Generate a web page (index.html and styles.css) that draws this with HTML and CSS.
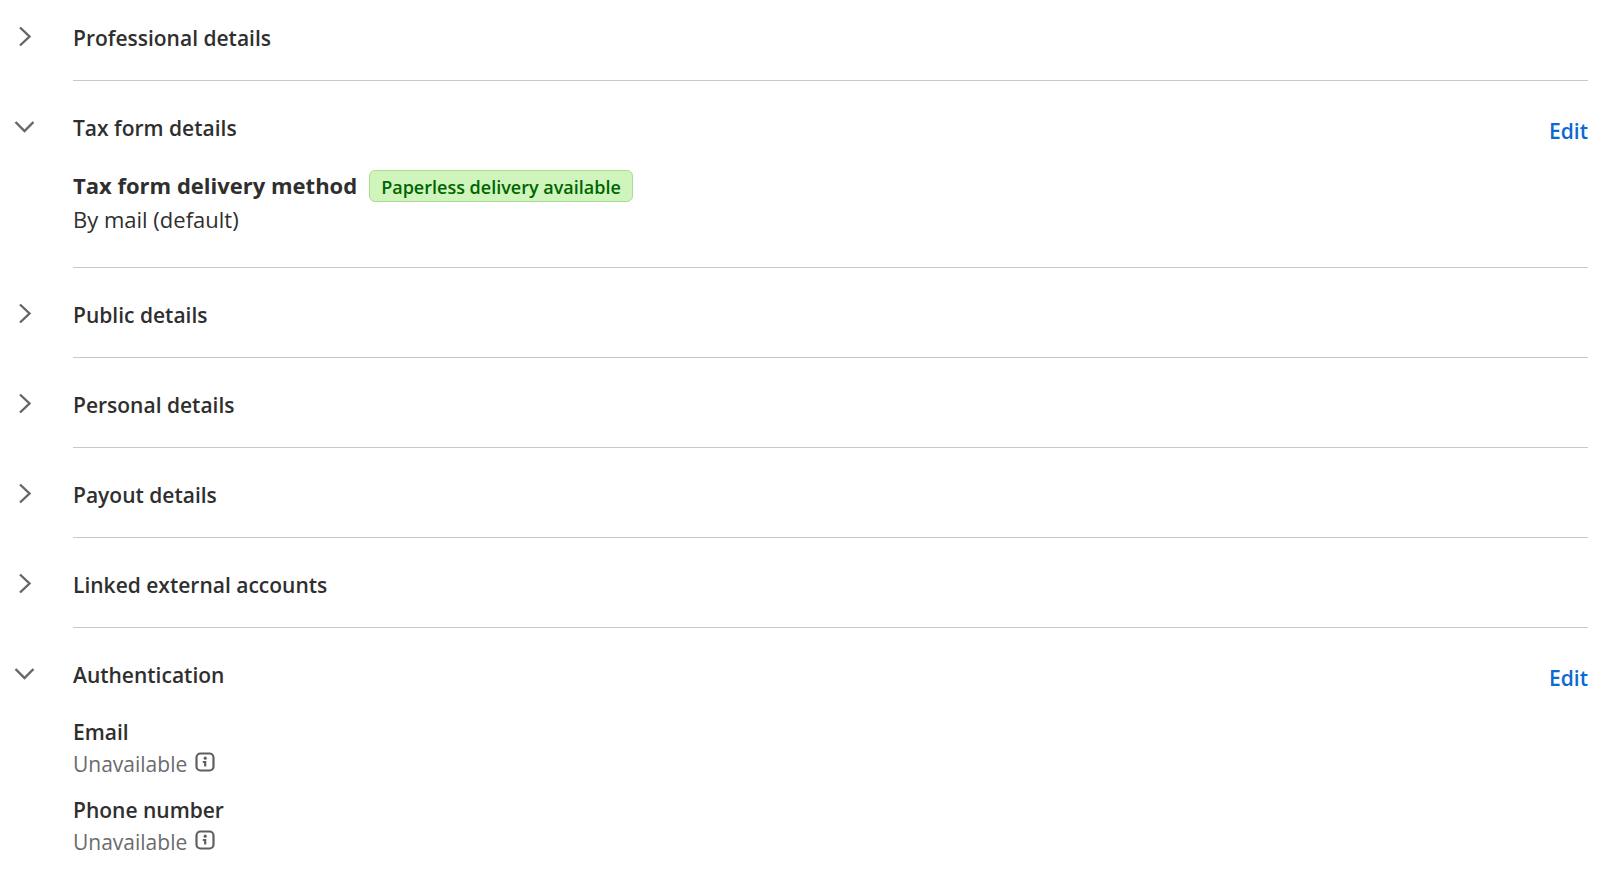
FILE: index.html
```html
<!DOCTYPE html>
<html lang="en">
<head>
<meta charset="utf-8">
<meta name="viewport" content="width=device-width, initial-scale=1">
<title>Profile settings</title>
<link rel="stylesheet" href="styles.css">
</head>
<body>
<svg class="sprite" aria-hidden="true">
  <symbol id="chevron-right" viewBox="0 0 24 24"><path d="M8 3.500l9.500 9L8 21.500"/></symbol>
  <symbol id="chevron-down" viewBox="0 0 24 24"><path d="M3.500 8l9 9 9-9"/></symbol>
  <symbol id="info" viewBox="0 0 20 20"><rect x="1.500" y="1.500" width="17" height="17" rx="4"/><circle class="dot" cx="10.200" cy="6.200" r="1.600"/><path d="M7.800 10h2.400v4.600"/></symbol>
</svg>
<main class="sections">
  <section class="section">
    <button class="toggle" type="button" aria-expanded="false" aria-labelledby="t-professional"><svg class="chevron"><use href="#chevron-right"/></svg></button>
    <div class="body"><header class="head"><h2 class="title" id="t-professional">Professional details</h2></header></div>
  </section>
  <section class="section">
    <button class="toggle" type="button" aria-expanded="true" aria-labelledby="t-tax"><svg class="chevron"><use href="#chevron-down"/></svg></button>
    <div class="body body-open">
      <header class="head"><h2 class="title" id="t-tax">Tax form details</h2><a class="edit" href="#tax">Edit</a></header>
      <dl class="fields">
        <div class="field field-large">
          <dt class="label">Tax form delivery method <span class="badge">Paperless delivery available</span></dt>
          <dd class="value">By mail (default)</dd>
        </div>
      </dl>
    </div>
  </section>
  <section class="section">
    <button class="toggle" type="button" aria-expanded="false" aria-labelledby="t-public"><svg class="chevron"><use href="#chevron-right"/></svg></button>
    <div class="body"><header class="head"><h2 class="title" id="t-public">Public details</h2></header></div>
  </section>
  <section class="section">
    <button class="toggle" type="button" aria-expanded="false" aria-labelledby="t-personal"><svg class="chevron"><use href="#chevron-right"/></svg></button>
    <div class="body"><header class="head"><h2 class="title" id="t-personal">Personal details</h2></header></div>
  </section>
  <section class="section">
    <button class="toggle" type="button" aria-expanded="false" aria-labelledby="t-payout"><svg class="chevron"><use href="#chevron-right"/></svg></button>
    <div class="body"><header class="head"><h2 class="title" id="t-payout">Payout details</h2></header></div>
  </section>
  <section class="section">
    <button class="toggle" type="button" aria-expanded="false" aria-labelledby="t-linked"><svg class="chevron"><use href="#chevron-right"/></svg></button>
    <div class="body"><header class="head"><h2 class="title" id="t-linked">Linked external accounts</h2></header></div>
  </section>
  <section class="section">
    <button class="toggle" type="button" aria-expanded="true" aria-labelledby="t-auth"><svg class="chevron"><use href="#chevron-down"/></svg></button>
    <div class="body body-last">
      <header class="head"><h2 class="title" id="t-auth">Authentication</h2><a class="edit" href="#authentication">Edit</a></header>
      <dl class="fields">
        <div class="field">
          <dt class="label">Email</dt>
          <dd class="value value-muted">Unavailable <button class="info" type="button" aria-label="About email"><svg class="info-icon"><use href="#info"/></svg></button></dd>
        </div>
        <div class="field">
          <dt class="label">Phone number</dt>
          <dd class="value value-muted">Unavailable <button class="info" type="button" aria-label="About phone number"><svg class="info-icon"><use href="#info"/></svg></button></dd>
        </div>
      </dl>
    </div>
  </section>
</main>
</body>
</html>
```
FILE: styles.css
```css
* { box-sizing: border-box; }

body {
  margin: 0;
  background: #fff;
  color: #2f2f2f;
  font: 400 21px/32px "Segoe UI", "Open Sans", "Noto Sans", sans-serif;
}

.sprite { display: none; }

.sections { padding-right: 12px; }

.section { display: flex; padding-left: 12px; }

.toggle {
  flex: none;
  align-self: flex-start;
  display: flex;
  align-items: center;
  width: 61px;
  height: 32px;
  margin-top: 29px;
  padding: 0;
  border: 0;
  background: none;
  cursor: pointer;
}

.chevron {
  width: 24px;
  height: 24px;
  fill: none;
  stroke: #666;
  stroke-width: 2.4;
}

.body {
  flex: 1;
  min-width: 0;
  padding: 31px 0 26px;
  border-bottom: 1px solid #c8c8c8;
}

.section:first-child .body { padding-top: 22px; }
.section:first-child .toggle { margin-top: 20px; }

.body-open { padding-bottom: 32px; }
.body-last { padding-bottom: 8px; border-bottom: 0; }

.head {
  display: flex;
  justify-content: space-between;
  height: 32px;
}

.title { margin: 0; font-size: 21px; font-weight: 600; }

.edit {
  padding-top: 3px;
  color: #0a6ad4;
  font-weight: 600;
  text-decoration: none;
}

.fields {
  display: grid;
  gap: 14px;
  margin: 25px 0 0;
}

.field { display: grid; }
.field-large { gap: 1px; font-size: 22px; }

.label { display: flex; align-items: baseline; gap: 12px; font-weight: 600; }
.field-large .label { font-weight: 700; }

.badge {
  padding: 2px 11px 0;
  border: 1px solid #a9dd94;
  border-radius: 6px;
  background: #cff5bd;
  color: #006400;
  font-size: 18px;
  font-weight: 600;
  line-height: 28px;
}

.value { display: flex; align-items: center; gap: 8px; margin: 0; }
.value-muted { color: #6b6b6b; }

.info {
  display: flex;
  margin-bottom: 4px;
  padding: 0;
  border: 0;
  background: none;
  cursor: pointer;
}

.info-icon {
  width: 20px;
  height: 20px;
  fill: none;
  stroke: #5f5f5f;
  stroke-width: 2.2;
}

.dot { fill: #5f5f5f; stroke: none; }
```
